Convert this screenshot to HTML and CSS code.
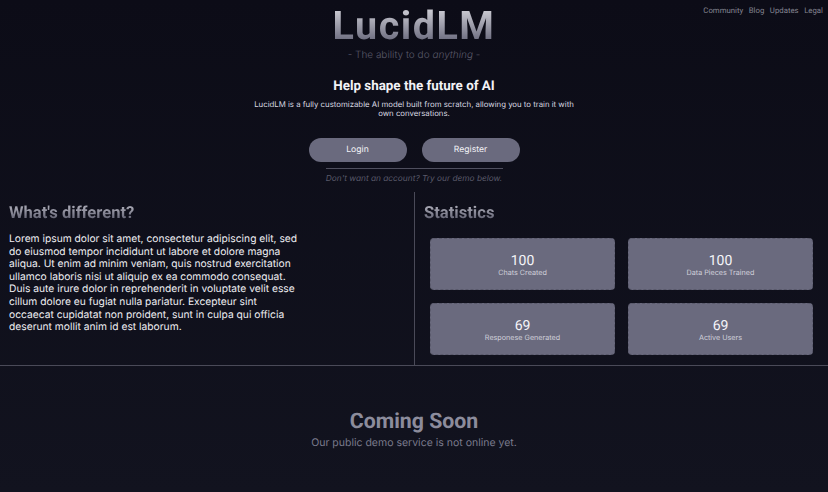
FILE: index.html
```html
<!DOCTYPE html>
<html lang="en">
<head>
<meta charset="utf-8">
<title>LucidLM</title>
<link rel="stylesheet" href="styles.css">
</head>
<body>
<nav class="topnav">
  <a>Community</a><a>Blog</a><a>Updates</a><a>Legal</a>
</nav>
<header class="hero">
  <h1 class="logo">LucidLM</h1>
  <p class="tagline">- The ability to do <em>anything</em> -</p>
  <h2 class="shape">Help shape the future of AI</h2>
  <p class="intro">LucidLM is a fully customizable AI model built from scratch, allowing you to train it with own conversations.</p>
  <div class="actions">
    <a class="btn">Login</a>
    <a class="btn">Register</a>
  </div>
  <p class="demo">Don't want an account? Try our demo below.</p>
</header>
<main class="split">
  <section class="left">
    <h3 class="section-title">What's different?</h3>
    <p class="lorem">Lorem ipsum dolor sit amet, consectetur adipiscing elit, sed do eiusmod tempor incididunt ut labore et dolore magna aliqua. Ut enim ad minim veniam, quis nostrud exercitation ullamco laboris nisi ut aliquip ex ea commodo consequat. Duis aute irure dolor in reprehenderit in voluptate velit esse cillum dolore eu fugiat nulla pariatur. Excepteur sint occaecat cupidatat non proident, sunt in culpa qui officia deserunt mollit anim id est laborum.</p>
  </section>
  <section class="right">
    <h3 class="section-title">Statistics</h3>
    <div class="stats">
      <div class="stat"><span class="num">100</span><span class="label">Chats Created</span></div>
      <div class="stat"><span class="num">100</span><span class="label">Data Pieces Trained</span></div>
      <div class="stat"><span class="num">69</span><span class="label">Responese Generated</span></div>
      <div class="stat"><span class="num">69</span><span class="label">Active Users</span></div>
    </div>
  </section>
</main>
<section class="soon">
  <h2 class="soon-title">Coming Soon</h2>
  <p class="soon-text">Our public demo service is not online yet.</p>
</section>
</body>
</html>
```
FILE: styles.css
```css
* { box-sizing: border-box; }
html, body { height: 100%; }
body {
  margin: 0;
  height: 492px;
  overflow: hidden;
  background: linear-gradient(180deg, #0c0c17 0%, #12131f 100%);
  font-family: Inter, "Liberation Sans", sans-serif;
  color: #fff;
  text-rendering: geometricPrecision;
}
.topnav {
  position: absolute;
  top: 5px;
  right: 5px;
  display: flex;
  gap: 5.5px;
  font-family: Roboto, sans-serif;
  font-size: 7.8px;
  line-height: 12px;
  color: #83838f;
}
.hero {
  display: flex;
  flex-direction: column;
  align-items: center;
  height: 192px;
  text-align: center;
}
.logo {
  margin: 4px 0 0;
  font-family: Roboto, sans-serif;
  font-size: 39.5px;
  line-height: 44px;
  font-weight: 700;
  letter-spacing: 1.5px;
  background: linear-gradient(180deg, #c8c8d0 15%, #6b6b7e 85%);
  -webkit-background-clip: text;
  background-clip: text;
  color: transparent;
}
.tagline {
  margin: 0;
  font-size: 10px;
  line-height: 14px;
  font-weight: 300;
  color: #5a5a6a;
}
.shape {
  margin: 16px 0 0;
  font-family: Roboto, sans-serif;
  font-size: 13.4px;
  line-height: 18px;
  font-weight: 700;
  color: #f2f2f6;
}
.intro {
  width: 330px;
  margin: 4px 0 0;
  font-size: 7.8px;
  line-height: 9px;
  color: #d8d8e0;
}
.actions {
  display: flex;
  gap: 15px;
  margin-top: 20px;
}
.btn {
  width: 98px;
  height: 23.5px;
  border-radius: 12px;
  background: #6a6a7e;
  font-size: 8.6px;
  line-height: 24px;
  color: #f2f2f6;
}
.demo {
  width: 177px;
  margin: 6.5px 0 0;
  padding-top: 5px;
  border-top: 1px solid #4f4f5e;
  font-size: 8.3px;
  line-height: 11px;
  font-style: italic;
  white-space: nowrap;
  color: #5a5a6a;
}
.split {
  display: grid;
  grid-template-columns: 414px 1fr;
  height: 174px;
  border-bottom: 1px solid #4a4a58;
}
.left { padding: 0 9px; }
.right {
  border-left: 1px solid #4a4a58;
  padding: 0 15px 0 9px;
}
.section-title {
  margin: 12px 0 0;
  font-family: Roboto, sans-serif;
  font-size: 16.6px;
  line-height: 20px;
  font-weight: 700;
  background: linear-gradient(180deg, #a2a2ae 20%, #5f5f70 80%);
  -webkit-background-clip: text;
  background-clip: text;
  color: transparent;
}
.lorem {
  width: 292px;
  margin: 9px 0 0;
  font-size: 10.25px;
  line-height: 12.6px;
  color: #eeeef2;
}
.stats {
  display: grid;
  grid-template-columns: 185px 185px;
  gap: 13.5px 13px;
  margin: 14px 0 0 6px;
}
.stat {
  display: flex;
  flex-direction: column;
  align-items: center;
  justify-content: center;
  height: 51.5px;
  padding-top: 3px;
  border-radius: 4px;
  border: 1px dashed #5a5a6c;
  background: #6a6a7e;
}
.num {
  font-family: Roboto, sans-serif;
  font-size: 14px;
  line-height: 14px;
  color: #f4f4f8;
}
.label {
  font-size: 7.2px;
  line-height: 9px;
  color: #d0d0da;
}
.soon {
  display: flex;
  flex-direction: column;
  align-items: center;
  text-align: center;
}
.soon-title {
  margin: 43px 0 0;
  font-family: Roboto, sans-serif;
  font-size: 21.3px;
  line-height: 26px;
  font-weight: 700;
  color: #8c8c9c;
}
.soon-text {
  margin: 1px 0 0;
  font-size: 10.5px;
  line-height: 14px;
  color: #7a7a8c;
}
```
